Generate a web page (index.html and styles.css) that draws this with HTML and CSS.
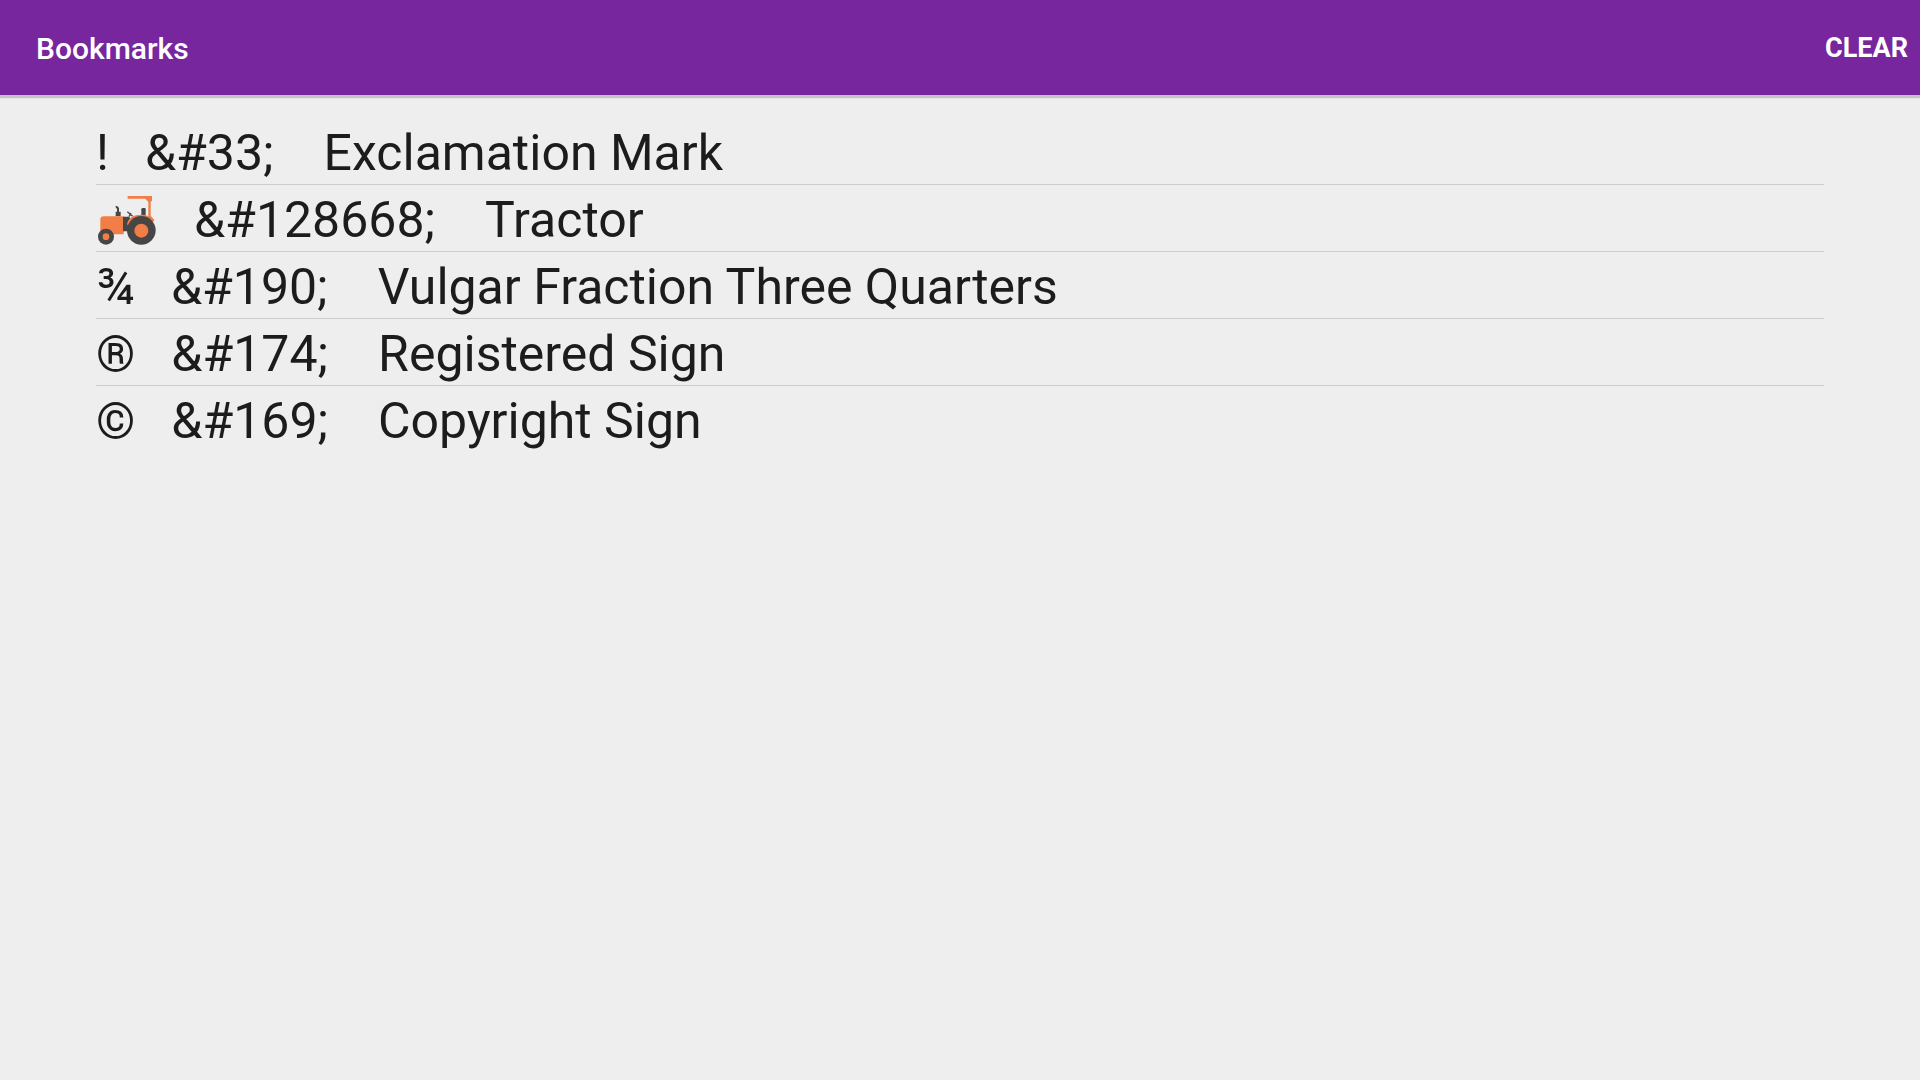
FILE: index.html
```html
<!DOCTYPE html>
<html lang="en">
	<head>
		<meta charset="UTF-8" />
		<meta name="viewport" content="width=device-width, initial-scale=1.0" />
		<title>Bookmarks</title>
		<link rel="stylesheet" href="styles.css">
	</head>
	<body>
		<header class="toolbar">
			<h1>Bookmarks</h1>
			<button type="button" class="clear">CLEAR</button>
		</header>
		<main>
			<ul class="bookmarks">
				<li>
					<span class="symbol">!</span>
					<span class="code">&amp;#33;</span>
					<span>Exclamation Mark</span>
				</li>
				<li>
					<svg class="symbol tractor" viewBox="33 45 186 150" role="img" aria-label="Tractor">
						<!-- exhaust and seat -->
						<path d="M92 109V95h4V86q-4-2-4-5v-4q9 1 10 8v10h5v14z" fill="#464646" />
						<path d="M169 106V88q0-4 5-4h5q3 0 3 4v18z" fill="#464646" />
						<path d="M127 95l16 14M138 99l-6 11" stroke="#464646" stroke-width="4" fill="none" />
						<!-- roof -->
						<path d="M128 48h73v14l-4 4v41l11 13-4 5-14-13V66l-9-10h-53z" fill="#f07e46" />
						<!-- body -->
						<path d="M46 153V118q0-9 10-9h60v54H72z" fill="#f07e46" />
						<path d="M114 110h18l8 10v34h-26z" fill="#464646" />
						<path d="M126 131q7-27 42-27 26 0 40 17l-3 4-37-9-38 24z" fill="#f07e46" />
						<!-- wheels -->
						<circle cx="169" cy="151" r="43" fill="#464646" />
						<circle cx="169" cy="152" r="21" fill="#f07e46" />
						<circle cx="63" cy="170" r="24" fill="#464646" />
						<circle cx="63" cy="170" r="10" fill="#f07e46" />
					</svg>
					<span class="code">&amp;#128668;</span>
					<span>Tractor</span>
				</li>
				<li>
					<span class="symbol">¾</span>
					<span class="code">&amp;#190;</span>
					<span>Vulgar Fraction Three Quarters</span>
				</li>
				<li>
					<span class="symbol">®</span>
					<span class="code">&amp;#174;</span>
					<span>Registered Sign</span>
				</li>
				<li>
					<span class="symbol">©</span>
					<span class="code">&amp;#169;</span>
					<span>Copyright Sign</span>
				</li>
			</ul>
		</main>
	</body>
</html>
```
FILE: styles.css
```css
* {
	box-sizing: border-box;
}
body {
	margin: 0;
	background: #eee;
	color: #1c1c1c;
	font-family: Roboto, sans-serif;
}
.toolbar {
	display: flex;
	align-items: center;
	justify-content: space-between;
	padding: 31px 12px 29px 36px;
	background: #77269e;
	color: #fff;
	box-shadow: 0 3px 1px #c4c4c4;
}
.toolbar h1 {
	margin: 0;
	font-size: 30px;
	font-weight: 500;
	line-height: 35px;
}
.clear {
	padding: 0;
	border: 0;
	background: none;
	color: inherit;
	font-family: inherit;
	font-size: 27px;
	font-weight: 700;
	line-height: 35px;
	cursor: pointer;
}
.bookmarks {
	margin: 0;
	padding: 23px 96px;
	list-style: none;
}
.bookmarks li {
	display: flex;
	align-items: center;
	padding-top: 4px;
	font-size: 50px;
	line-height: 62px;
}
.bookmarks li + li {
	border-top: 1px solid #ccc;
}
.symbol {
	margin-right: 36px;
}
.code {
	margin-right: 50px;
}
.tractor {
	width: 62px;
	height: 50px;
}
```
